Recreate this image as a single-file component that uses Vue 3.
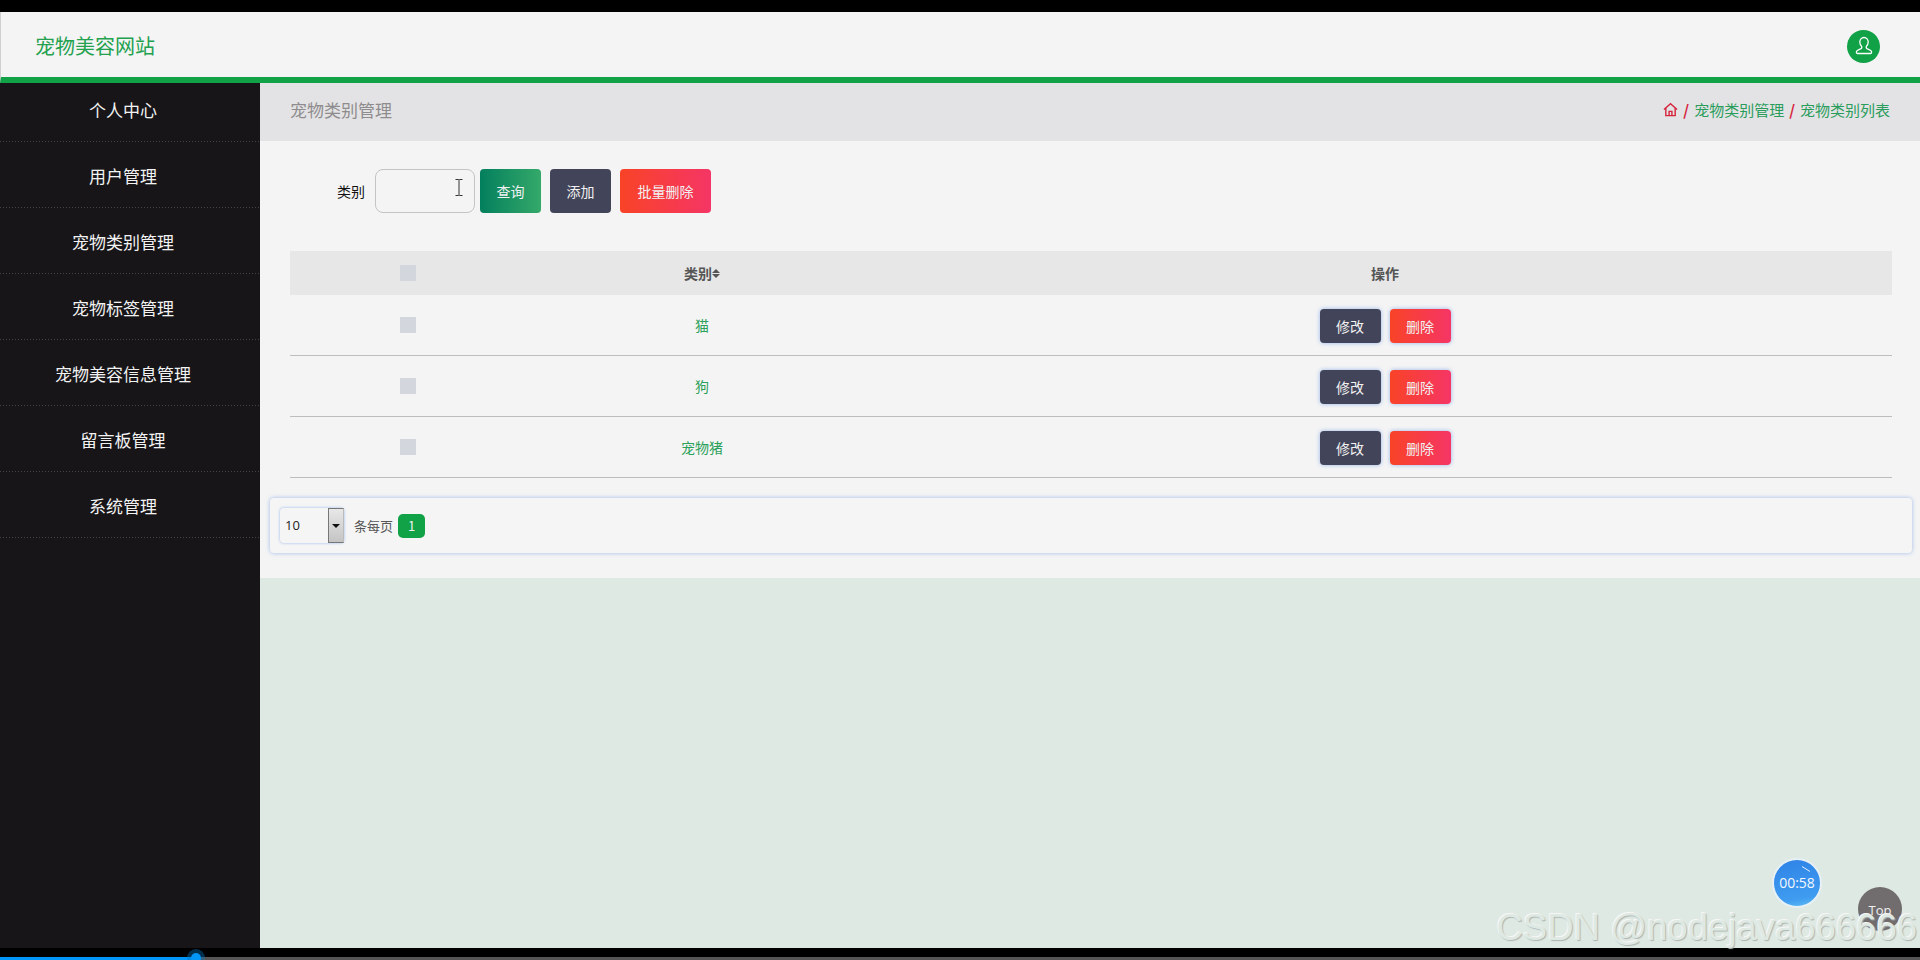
<script setup>
const menu = ['个人中心', '用户管理', '宠物类别管理', '宠物标签管理', '宠物美容信息管理', '留言板管理', '系统管理']
const rows = ['猫', '狗', '宠物猪']
</script>

<template>
  <div class="screen">
    <header class="topbar">
      <div class="brand">宠物美容网站</div>
      <div class="avatar">
        <svg width="20" height="20" viewBox="0 0 20 20" fill="none" stroke="#fff" stroke-width="1.3">
          <path d="M10 1.5c-2.6 0-4.2 2-4.2 4.6 0 1.9.8 3.4 1.9 4.3.3.9.1 1.7-.6 2.2-1.2.8-3.4 1.3-4.4 2.6-.6.8-.3 2.3.7 2.3h13.2c1 0 1.3-1.5.7-2.3-1-1.3-3.2-1.8-4.4-2.6-.7-.5-.9-1.3-.6-2.2 1.1-.9 1.9-2.4 1.9-4.3 0-2.6-1.6-4.6-4.2-4.6z" />
        </svg>
      </div>
    </header>
    <div class="body">
      <aside class="sidebar">
        <div v-for="m in menu" :key="m" class="menu-item">{{ m }}</div>
      </aside>
      <main class="main">
        <div class="crumbbar">
          <span class="crumb-title">宠物类别管理</span>
          <div class="crumbs">
            <svg width="15" height="15" viewBox="0 0 16 16" fill="none" stroke="#d6243c" stroke-width="1.5">
              <path d="M1 8 8 1.8 15 8" />
              <path d="M3 6.5V14.5H13V6.5" />
              <path d="M6.5 14.5V10H9.5V14.5" />
            </svg>
            <span class="sep">/</span><span>宠物类别管理</span><span class="sep">/</span><span>宠物类别列表</span>
          </div>
        </div>
        <section class="panel">
          <div class="search">
            <label class="search-label">类别</label>
            <div class="search-input">
              <svg class="cursor" width="8" height="17" viewBox="0 0 8 17" fill="none" stroke="#333" stroke-width="1">
                <path d="M0.5 .5H3.5L4 1L4.5 .5H7.5M4 1V16M0.5 16.5H3.5L4 16L4.5 16.5H7.5" />
              </svg>
            </div>
            <button class="btn btn-green first">查询</button>
            <button class="btn btn-dark">添加</button>
            <button class="btn btn-red wide">批量删除</button>
          </div>
          <div class="table">
            <div class="tr th">
              <div class="c-check"><i class="box"></i></div>
              <div class="c-name">类别<span class="sort"><b></b><b></b></span></div>
              <div class="c-op">操作</div>
            </div>
            <div v-for="r in rows" :key="r" class="tr td">
              <div class="c-check"><i class="box"></i></div>
              <div class="c-name green">{{ r }}</div>
              <div class="c-op ops">
                <button class="btn small btn-dark glow">修改</button>
                <button class="btn small btn-red glow">删除</button>
              </div>
            </div>
          </div>
          <div class="pager">
            <div class="select">
              <span class="select-val">10</span>
              <span class="select-arrow"><i></i></span>
            </div>
            <span class="per">条每页</span>
            <span class="page-no">1</span>
          </div>
        </section>
        <div class="rest">
          <div class="timer">
            <svg class="timer-arc" width="46" height="46" viewBox="0 0 46 46" fill="none" stroke="#dff0ff" stroke-width="1">
              <path d="M28 6.5 36 11.5" />
            </svg>
            00:58
          </div>
          <div class="top-btn">Top</div>
          <div class="watermark">CSDN @nodejava666666</div>
        </div>
      </main>
    </div>
    <div class="progress"><div class="progress-fill"></div><div class="progress-knob"></div></div>
  </div>
</template>

<style>
html, body { margin: 0; background: #000; }
</style>

<style scoped>
.screen {
  width: 1920px;
  height: 960px;
  background: #000;
  padding: 12px 0;
  box-sizing: border-box;
  display: flex;
  flex-direction: column;
  position: relative;
  overflow: hidden;
  font-family: "Noto Sans CJK SC", "Liberation Sans", sans-serif;
}
.topbar {
  height: 71px;
  flex: none;
  box-sizing: border-box;
  background: #f4f4f4;
  border-bottom: 6px solid #11a146;
  border-left: 1px solid #d0d0d0;
  display: flex;
  align-items: center;
  justify-content: space-between;
  padding: 3px 40px 0 34px;
}
.brand { color: #23a14f; font-size: 20px; line-height: 30px; }
.avatar {
  width: 33px;
  height: 33px;
  border-radius: 50%;
  background: #11a146;
  display: flex;
  align-items: center;
  justify-content: center;
}
.body { flex: 1; display: flex; min-height: 0; }
.sidebar { width: 260px; flex: none; background: #171518; }
.menu-item {
  height: 66px;
  box-sizing: border-box;
  background: repeating-linear-gradient(90deg, #454349 0 1.5px, transparent 1.5px 3px) left bottom / 100% 1px no-repeat;
  color: #f2f2f2;
  font-size: 17px;
  text-align: center;
  line-height: 67px;
  padding-right: 14px;
}
.menu-item:first-child { height: 59px; line-height: 53px; }
.main { flex: 1; display: flex; flex-direction: column; min-width: 0; }
.crumbbar {
  height: 58px;
  flex: none;
  box-sizing: border-box;
  background: #e3e3e5;
  display: flex;
  align-items: center;
  justify-content: space-between;
  padding: 0 30px 6px;
}
.crumb-title { color: #8f8c8e; font-size: 17px; }
.crumbs { display: flex; align-items: center; color: #2a9d5c; font-size: 15px; }
.crumbs svg { margin-right: 5px; }
.sep { color: #d6243c; font-weight: 700; margin-right: 5px; }
.crumbs span:not(.sep) + .sep { margin-left: 5px; }
.panel {
  height: 437px;
  flex: none;
  box-sizing: border-box;
  background: #f4f4f4;
  padding: 28px 28px 0 10px;
}
.search { display: flex; align-items: center; height: 44px; padding-left: 67px; }
.search-label { color: #111; font-size: 14px; width: 28px; margin-right: 10px; }
.search-input {
  width: 100px;
  height: 44px;
  box-sizing: border-box;
  border: 1px solid #c4c4c4;
  border-radius: 8px;
  position: relative;
}
.cursor { position: absolute; left: 79px; top: 9px; }
.btn {
  border: 0;
  border-radius: 4px;
  color: #f1f1f1;
  font-family: inherit;
  font-size: 14px;
  width: 61px;
  height: 44px;
  padding: 0;
  margin-right: 9px;
}
.first { margin-left: 5px; }
.wide { width: 91px; margin-right: 0; }
.btn-green { background: linear-gradient(90deg, #037f5d, #35a96a); }
.btn-dark { background: #424559; }
.btn-red { background: linear-gradient(90deg, #f94327, #f53565); }
.table { margin: 38px 0 0 20px; width: 1602px; }
.tr { display: flex; align-items: center; }
.th {
  height: 44px;
  background: #e7e7e7;
  color: #555;
  font-size: 14px;
  font-weight: 700;
}
.td { height: 61px; border-bottom: 1px solid #bdbdbd; box-sizing: border-box; font-size: 14px; }
.td:first-of-type { height: 60px; }
.c-check { width: 236px; display: flex; justify-content: center; }
.box { display: block; width: 16px; height: 16px; background: #d3d6dc; }
.c-name { width: 352px; text-align: center; display: flex; align-items: center; justify-content: center; }
.green { color: #2aa15a; }
.c-op { flex: 1; text-align: center; }
.ops { display: flex; justify-content: center; gap: 9px; }
.sort { display: inline-flex; flex-direction: column; gap: 1px; }
.sort b { display: block; width: 0; height: 0; border: 4px solid transparent; border-top-width: 0; border-bottom: 4.5px solid #555; }
.sort b + b { border-bottom-width: 0; border-top: 4.5px solid #555; }
.small { height: 34px; margin: 0; font-size: 14px; position: relative; top: 1px; }
.glow { box-shadow: 0 0 4px rgba(90, 140, 230, .6); }
.pager {
  margin-top: 20px;
  height: 55px;
  box-sizing: border-box;
  border-radius: 4px;
  box-shadow: 0 0 4px rgba(90, 140, 230, .55);
  background: #f5f5f5;
  display: flex;
  align-items: center;
  padding-left: 10px;
  width: 1642px;
}
.select {
  width: 64px;
  height: 35px;
  box-sizing: border-box;
  border-radius: 4px;
  box-shadow: 0 0 3px rgba(90, 140, 230, .6);
  display: flex;
  justify-content: space-between;
}
.select-val { color: #222; font-size: 13px; line-height: 35px; padding-left: 5px; font-family: "Open Sans", sans-serif; }
.select-arrow {
  width: 16px;
  box-sizing: border-box;
  border: 1px solid #777;
  border-right-color: #bbb;
  background: linear-gradient(#e8e8e8, #c4c4c4);
  display: flex;
  align-items: center;
  justify-content: center;
}
.select-arrow i { width: 0; height: 0; border: 4px solid transparent; border-top-color: #111; border-bottom-width: 0; }
.per { color: #555; font-size: 13px; margin-left: 10px; }
.page-no {
  width: 27px;
  height: 24px;
  margin-left: 5px;
  border-radius: 5px;
  background: #11a146;
  color: #f0f0f0;
  font-size: 13px;
  line-height: 24px;
  text-align: center;
}
.rest { flex: 1; background: #dfe9e3; position: relative; }
.timer {
  position: absolute;
  left: 1512px;
  top: 280px;
  width: 46px;
  height: 46px;
  border-radius: 50%;
  border: 2px solid #e6f0f5;
  background: linear-gradient(170deg, #2f83e6, #3f9cf0 80%, #60c0f5);
  color: #f3f8ff;
  font: 14px/46px "Open Sans", sans-serif;
  text-align: center;
}
.timer-arc { position: absolute; left: 0; top: 0; }
.top-btn {
  position: absolute;
  left: 1598px;
  top: 309px;
  width: 44px;
  height: 44px;
  box-sizing: border-box;
  padding-top: 16px;
  border-radius: 50%;
  background: #716c6e;
  color: #f0f0f0;
  font: 13px/14px "Open Sans", sans-serif;
  text-align: center;
}
.watermark {
  position: absolute;
  right: 3px;
  bottom: 7px;
  color: #dfe9e3;
  font: 36.5px/26px "Liberation Sans", sans-serif;
  text-shadow: 1px 1px 1px #aeb4b1, -1px -1px 0 #f7f7f7;
  white-space: nowrap;
}
.progress {
  position: absolute;
  left: 0;
  right: 0;
  bottom: 0;
  height: 3px;
  background: #555;
}
.progress-fill { width: 196px; height: 3px; background: #0095f6; }
.progress-knob {
  position: absolute;
  left: 191px;
  top: -4px;
  width: 10px;
  height: 10px;
  border-radius: 50%;
  background: #0095f6;
  box-shadow: 0 0 0 4px rgba(0, 120, 200, .4);
}
</style>
